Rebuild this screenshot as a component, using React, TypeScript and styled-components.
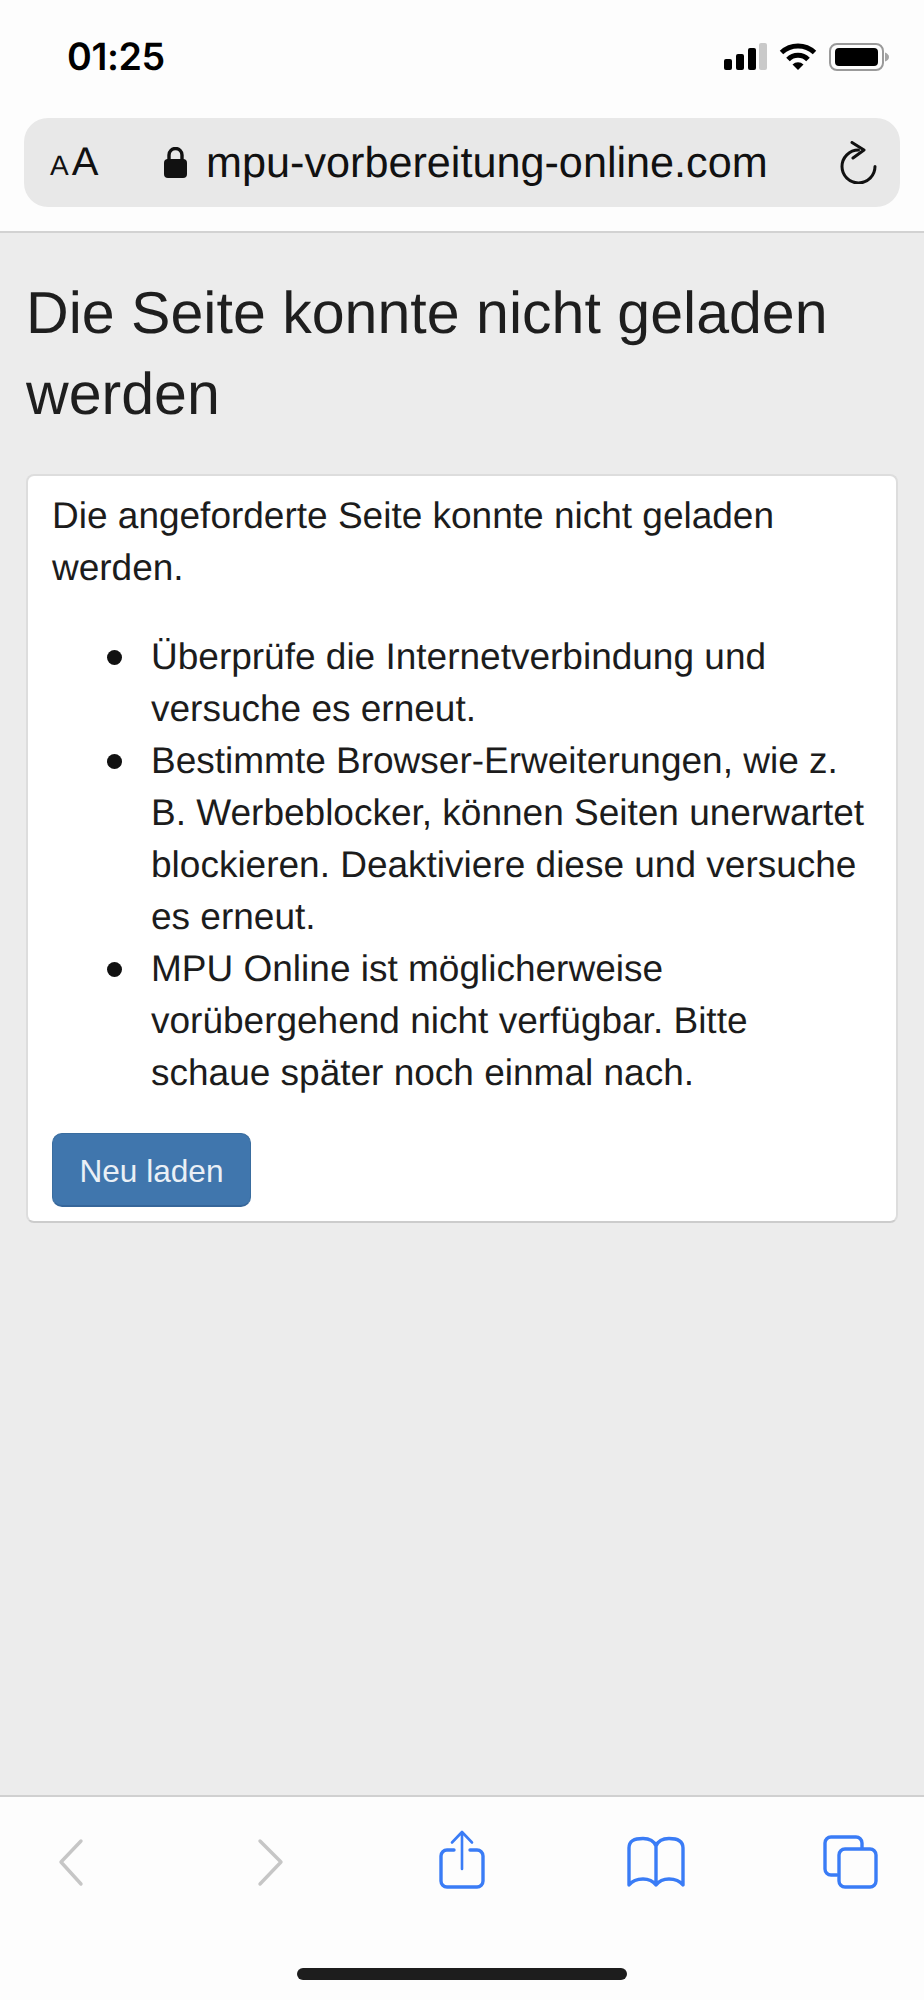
import React from 'react';
import styled, { createGlobalStyle } from 'styled-components';

const GlobalStyle = createGlobalStyle`
    html, body {
        margin: 0;
        padding: 0;
        background: #ececec;
    }
    body {
        font-family: "Liberation Sans", Arial, sans-serif;
        text-rendering: geometricPrecision;
    }
`;

const Page = styled.div`
    display: flex;
    flex-direction: column;
    width: 924px;
    height: 2000px;
    overflow: hidden;
`;

const Header = styled.header`
    background: #fdfdfd;
    border-bottom: 2px solid #d2d2d2;
    height: 231px;
    flex: none;
`;

const StatusBar = styled.div`
    display: flex;
    align-items: center;
    justify-content: space-between;
    height: 114px;
    padding: 0 35px 0 67px;
`;

const Time = styled.span`
    font-family: Inter, "Liberation Sans", sans-serif;
    font-weight: 600;
    font-size: 37.6px;
    letter-spacing: -0.4px;
    color: #000;
`;

const StatusIcons = styled.div`
    display: flex;
    align-items: center;
    gap: 12px;
    margin-top: -1px;
`;

const UrlBar = styled.div`
    display: flex;
    align-items: center;
    height: 89px;
    margin: 4px 24px 0;
    padding: 0 23px 0 26px;
    background: #e8e8e8;
    border-radius: 24px;
`;

const TextSize = styled.span`
    display: flex;
    align-items: baseline;
    gap: 3px;
    width: 114px;
    flex: none;
    color: #111;
    font-family: "Liberation Sans", sans-serif;
`;

const SmallA = styled.span`
    font-size: 28px;
`;

const BigA = styled.span`
    font-size: 40px;
`;

const Url = styled.span`
    flex: 1;
    margin: 2px 0 0 19px;
    font-size: 43.2px;
    color: #111;
    white-space: nowrap;
`;

const Main = styled.main`
    flex: 1;
    padding: 39px 26px 0 26px;
    background: #ececec;
`;

const Title = styled.h1`
    margin: 0 0 40px;
    font-size: 59.1px;
    font-weight: 400;
    line-height: 81px;
    color: #1e1e1e;
`;

const Card = styled.section`
    padding: 14px 24px 14px;
    background: #fff;
    border: 2px solid #ddd;
    border-bottom-color: #ccc;
    border-radius: 8px;
    color: #1c1c1c;
    font-size: 37px;
    line-height: 52px;
`;

const Intro = styled.p`
    margin: 0 0 37px;
`;

const Hints = styled.ul`
    margin: 0 0 34px;
    padding-left: 99px;
    list-style: none;
`;

const Hint = styled.li`
    position: relative;
    &::before {
        content: '';
        position: absolute;
        left: -44px;
        top: 19px;
        width: 15px;
        height: 15px;
        background: #111;
        border-radius: 50%;
    }
`;

const ReloadButton = styled.button`
    display: block;
    width: 199px;
    height: 74px;
    padding: 4px 0 0;
    background: #4076ad;
    border: 1px solid #3a6d9f;
    border-bottom: 2px solid #36669a;
    border-radius: 10px;
    color: #eaf0f6;
    font-family: inherit;
    font-size: 31.6px;
`;

const Toolbar = styled.footer`
    flex: none;
    height: 203px;
    background: #fdfdfd;
    border-top: 2px solid #d0d0d0;
`;

const ToolRow = styled.nav`
    display: flex;
    gap: 137px;
    padding: 34px 0 0 41.5px;
`;

const ToolIcon = styled.svg<{ $active?: boolean }>`
    display: block;
    flex: none;
    width: 58px;
    height: 58px;
    overflow: visible;
    fill: none;
    stroke: ${(props) => (props.$active ? '#3a7cf6' : '#c6c6c6')};
    stroke-width: 3.4;
    stroke-linecap: round;
    stroke-linejoin: round;
`;

const HomeIndicator = styled.div`
    width: 330px;
    height: 12px;
    margin: 79px auto 0;
    background: #1d1d1d;
    border-radius: 6px;
`;

const SignalIcon = () => (
    <svg width="43" height="27" viewBox="0 0 43 27">
        <rect x="0" y="16" width="8" height="11" rx="2" fill="#000" />
        <rect x="12" y="11" width="8" height="16" rx="2" fill="#000" />
        <rect x="24" y="5" width="8" height="22" rx="2" fill="#000" />
        <rect x="35" y="0" width="8" height="27" rx="2" fill="#c9c9c9" />
    </svg>
);

const WifiIcon = () => (
    <svg width="38" height="27" viewBox="0 0 38 27" fill="none">
        <path d="M2.5 9.5A24 24 0 0 1 35.5 9.5" stroke="#000" strokeWidth="5" />
        <path d="M9 16.5A14 14 0 0 1 29 16.5" stroke="#000" strokeWidth="5" />
        <path d="M13.5 21.5A8 8 0 0 1 24.5 21.5L19 27Z" fill="#000" />
    </svg>
);

const BatteryIcon = () => (
    <svg width="60" height="28" viewBox="0 0 60 28" fill="none">
        <rect x="1" y="1" width="53" height="26" rx="7" stroke="#9a9a9a" strokeWidth="2" />
        <rect x="6" y="5" width="43" height="18" rx="4" fill="#000" />
        <path d="M56 9.5C58.5 10.5 60 12 60 14S58.5 17.500 56 18.500Z" fill="#a5a5a5" />
    </svg>
);

const LockIcon = () => (
    <svg width="23" height="31" viewBox="0 0 23 31" fill="none" style={{ flex: 'none' }}>
        <path d="M5 13V8a6.500 6.500 0 0 1 13 0v5" stroke="#111" strokeWidth="3.400" />
        <rect x="0" y="12" width="23" height="19" rx="4" fill="#111" />
    </svg>
);

const RefreshIcon = () => (
    <svg width="37" height="43" viewBox="0 0 37 43" fill="none" style={{ flex: 'none' }}>
        <path d="M18.500 9A16.500 16.500 0 1 0 35 25.500" stroke="#111" strokeWidth="3" strokeLinecap="round" />
        <path d="M12 1.500L24 9L13 17" stroke="#111" strokeWidth="3" strokeLinecap="round" strokeLinejoin="round" />
    </svg>
);

const App = () => (
    <Page>
        <GlobalStyle />
        <Header>
            <StatusBar>
                <Time>01:25</Time>
                <StatusIcons>
                    <SignalIcon />
                    <WifiIcon />
                    <BatteryIcon />
                </StatusIcons>
            </StatusBar>
            <UrlBar>
                <TextSize>
                    <SmallA>A</SmallA>
                    <BigA>A</BigA>
                </TextSize>
                <LockIcon />
                <Url>mpu-vorbereitung-online.com</Url>
                <RefreshIcon />
            </UrlBar>
        </Header>
        <Main>
            <Title>Die Seite konnte nicht geladen werden</Title>
            <Card>
                <Intro>Die angeforderte Seite konnte nicht geladen werden.</Intro>
                <Hints>
                    <Hint>Überprüfe die Internetverbindung und versuche es erneut.</Hint>
                    <Hint>
                        Bestimmte Browser-Erweiterungen, wie z. B.{'\u00a0'}Werbeblocker, können Seiten unerwartet
                        blockieren. Deaktiviere diese und versuche es erneut.
                    </Hint>
                    <Hint>MPU Online ist möglicherweise vorübergehend nicht verfügbar. Bitte schaue später noch einmal nach.</Hint>
                </Hints>
                <ReloadButton type="button">Neu laden</ReloadButton>
            </Card>
        </Main>
        <Toolbar>
            <ToolRow>
                <ToolIcon viewBox="0 0 58 58">
                    <path d="M39 10L19 31L39 53" />
                </ToolIcon>
                <ToolIcon viewBox="0 0 58 58">
                    <path d="M23 10L44 31L23 53" />
                </ToolIcon>
                <ToolIcon viewBox="0 0 58 58" $active>
                    <path d="M22 19H15a6 6 0 0 0-6 6V50a6 6 0 0 0 6 6H45a6 6 0 0 0 6-6V25a6 6 0 0 0-6-6H38" />
                    <path d="M30 38V1M20 11.500L30 1L40 11.500" strokeWidth="2.600" />
                </ToolIcon>
                <ToolIcon viewBox="0 0 58 58" $active>
                    <path d="M29 15C27 10 22 7.500 16 7.500C7 7.500 2 10 2 17V54C6 49 11 48 16 48C22 48 26 50 29 54C32 50 36 48 42 48C47 48 52 49 56 54V17C56 10 51 7.500 42 7.500C36 7.500 31 10 29 15V54" />
                </ToolIcon>
                <ToolIcon viewBox="0 0 58 58" $active>
                    <path d="M15 44H9a6 6 0 0 1-6-6V12a6 6 0 0 1 6-6H34a6 6 0 0 1 6 6V17" />
                    <rect x="17" y="18" width="37" height="38" rx="6" />
                </ToolIcon>
            </ToolRow>
            <HomeIndicator />
        </Toolbar>
    </Page>
);

export default App;
